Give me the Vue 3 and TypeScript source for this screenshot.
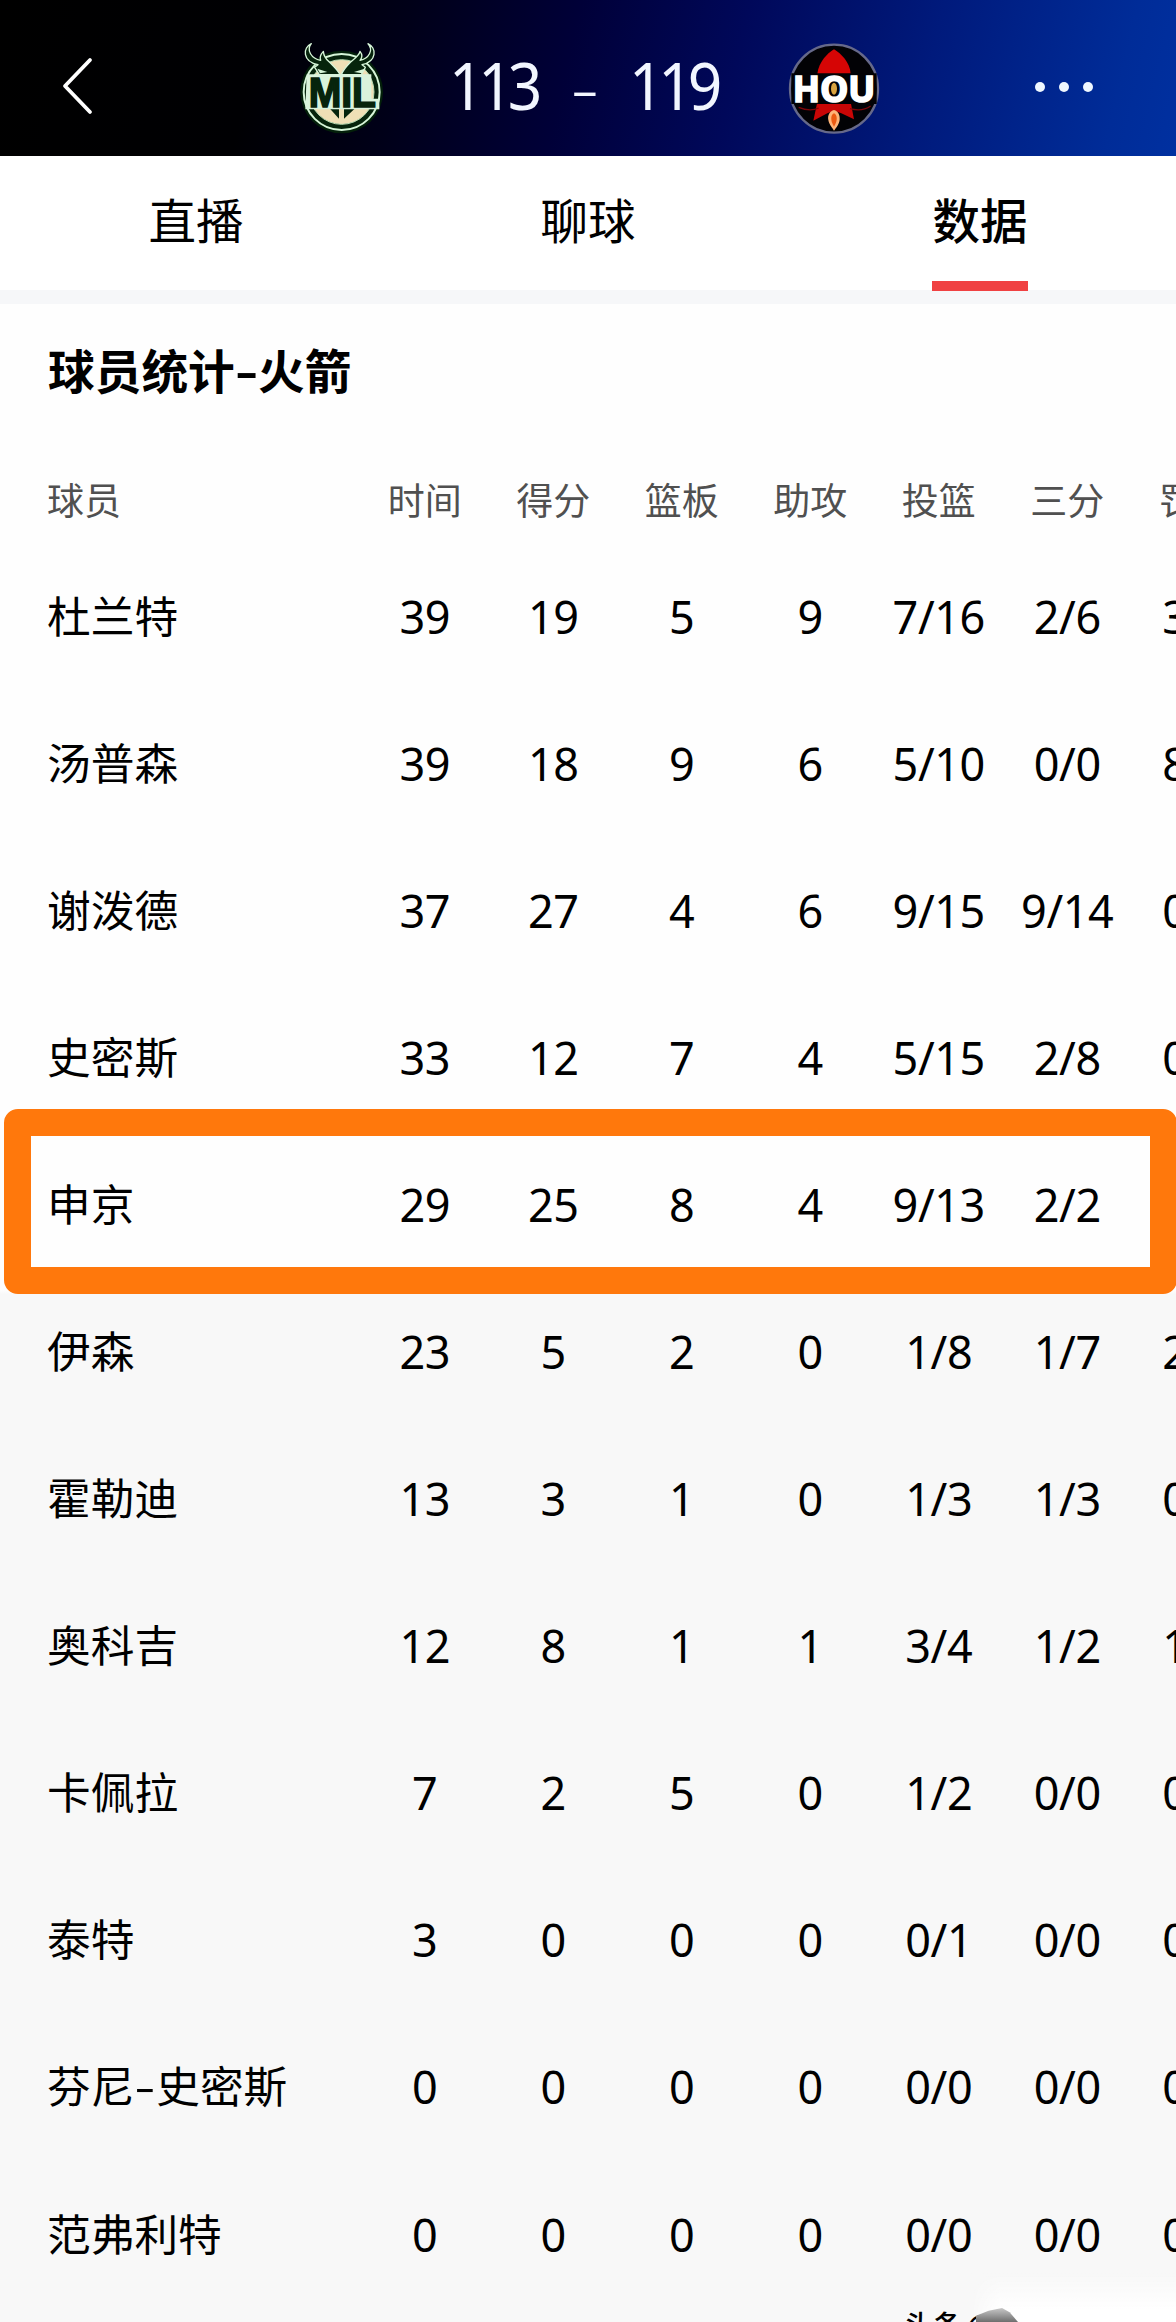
<script setup lang="ts">
import { ref } from 'vue';

interface Player {
  name: string;
  stats: string[];
  marked?: boolean;
}

const tabs = ['直播', '聊球', '数据'];
const activeTab = ref('数据');

const columns = ['时间', '得分', '篮板', '助攻', '投篮', '三分', '罚球'];

const players: Player[] = [
  { name: '杜兰特', stats: ['39', '19', '5', '9', '7/16', '2/6', '3/4'] },
  { name: '汤普森', stats: ['39', '18', '9', '6', '5/10', '0/0', '8/8'] },
  { name: '谢泼德', stats: ['37', '27', '4', '6', '9/15', '9/14', '0/0'] },
  { name: '史密斯', stats: ['33', '12', '7', '4', '5/15', '2/8', '0/0'] },
  { name: '申京', stats: ['29', '25', '8', '4', '9/13', '2/2', ''], marked: true },
  { name: '伊森', stats: ['23', '5', '2', '0', '1/8', '1/7', '2/2'] },
  { name: '霍勒迪', stats: ['13', '3', '1', '0', '1/3', '1/3', '0/0'] },
  { name: '奥科吉', stats: ['12', '8', '1', '1', '3/4', '1/2', '1/2'] },
  { name: '卡佩拉', stats: ['7', '2', '5', '0', '1/2', '0/0', '0/0'] },
  { name: '泰特', stats: ['3', '0', '0', '0', '0/1', '0/0', '0/0'] },
  { name: '芬尼-史密斯', stats: ['0', '0', '0', '0', '0/0', '0/0', '0/0'] },
  { name: '范弗利特', stats: ['0', '0', '0', '0', '0/0', '0/0', '0/0'] },
];
</script>

<template>
  <div class="page">
    <header class="header">
      <svg class="back" viewBox="0 0 48 70">
        <path d="M38 9 L13 35 L38 61" fill="none" stroke="#fff" stroke-width="3.8" stroke-linecap="round" stroke-linejoin="round" />
      </svg>
      <svg class="logo logo-mil" viewBox="0 0 360 330">
        <circle cx="185" cy="186" r="124" fill="#03200a" />
        <circle cx="185" cy="186" r="114" fill="#06240c" stroke="#d6f5d8" stroke-width="6" />
        <circle cx="185" cy="186" r="97" fill="#efdfb6" stroke="#b9dcb4" stroke-width="3" />
        <g fill="#06240c" stroke="#d6f5d8" stroke-width="4" stroke-linejoin="round">
          <path d="M94 41 C68 52 66 94 114 104 L104 112 L118 134 L180 134 C172 118 160 108 148 96 C136 86 131 76 130 64 C121 74 119 84 122 91 C94 86 78 60 94 41 Z" />
          <path d="M264 41 C290 52 292 94 246 104 L256 112 L244 134 L184 134 C190 118 200 108 212 96 C224 86 238 76 240 64 C248 74 246 84 240 91 C266 86 282 60 264 41 Z" />
        </g>
        <path d="M112 116 L142 126 L120 130 Z M254 116 L222 126 L246 130 Z" fill="#d6f5d8" />
        <path d="M150 236 L177 266 L177 236 Z M192 236 L192 266 L224 236 Z" fill="#06240c" />
        <path d="M80 133 H274 V206 H298 V238 H76 Z" fill="#d9f3dc" />
        <text x="187" y="230" text-anchor="middle" textLength="202" lengthAdjust="spacingAndGlyphs" class="mil-text">MIL</text>
      </svg>
      <div class="score">
        <span class="points">113</span>
        <span class="dash">-</span>
        <span class="points">119</span>
      </div>
      <svg class="logo logo-hou" viewBox="0 0 360 330">
        <circle cx="192" cy="176" r="132" fill="#020205" stroke="#66698a" stroke-width="7" />
        <path d="M192 58 C172 70 146 96 142 132 L242 132 C240 96 212 70 192 58 Z" fill="#d60505" />
        <path d="M142 216 L130 272 L172 250 L192 242 L214 250 L252 268 L242 216 Z" fill="#c90606" />
        <path d="M86 232 Q120 246 146 234 M240 236 Q276 246 302 228" fill="none" stroke="#7d0508" stroke-width="4" />
        <path d="M192 240 C180 242 172 256 175 270 C178 286 188 294 192 302 C198 294 206 286 209 270 C211 256 204 242 192 240 Z" fill="#ffb478" />
        <path d="M192 250 C182 254 180 272 192 290 C204 272 202 254 192 250 Z" fill="#ec5a12" />
        <path d="M64 130 H320 V222 H64 Z" fill="#020205" />
        <text x="192" y="215" text-anchor="middle" textLength="248" lengthAdjust="spacingAndGlyphs" class="hou-text">HOU</text>
        <ellipse cx="192" cy="176" rx="9" ry="18" fill="#d9a441" />
      </svg>
      <svg class="more" viewBox="0 0 60 12">
        <circle cx="6" cy="6" r="5" />
        <circle cx="30" cy="6" r="5" />
        <circle cx="54" cy="6" r="5" />
      </svg>
    </header>

    <nav class="tabs">
      <div
        v-for="tab in tabs"
        :key="tab"
        class="tab"
        :class="{ active: tab === activeTab }"
        @click="activeTab = tab"
      >
        <span class="tab-label">{{ tab }}</span>
      </div>
    </nav>

    <section class="panel">
      <h2 class="title">球员统计<span class="hyphen">-</span>火箭</h2>

      <div class="row head">
        <span class="name">球员</span>
        <span v-for="column in columns" :key="column" class="cell">{{ column }}</span>
      </div>

      <div v-for="player in players" :key="player.name" class="row" :class="{ marked: player.marked }">
        <span class="name">
          <template v-for="(part, i) in player.name.split('-')" :key="part">
            <span v-if="i > 0" class="hyphen">-</span>{{ part }}
          </template>
        </span>
        <span v-for="(stat, i) in player.stats" :key="i" class="cell">{{ stat }}</span>
      </div>
    </section>

    <div class="glow"></div>
    <div class="watermark">头条 <span class="at">@</span></div>
    <div class="smudge"></div>
  </div>
</template>

<style>
body {
  margin: 0;
}
</style>

<style scoped>
.page {
  position: relative;
  width: 1176px;
  height: 2322px;
  overflow: hidden;
  background: linear-gradient(#fefefe 0 1290px, #f8f8f8 1294px);
  color: #000;
  font-family: 'Noto Sans CJK SC', sans-serif;
}

.header {
  display: flex;
  align-items: center;
  box-sizing: border-box;
  height: 156px;
  padding: 14px 82px 0 52px;
  background: linear-gradient(103deg, #000 0%, #000003 22%, #000018 34%, #000038 48%, #00085a 62%, #001a7c 78%, #002c98 94%, #0030a0 100%);
}

.back {
  width: 48px;
  height: 70px;
  margin-top: 2px;
}

.logo {
  width: 120px;
  height: 110px;
}

.logo-mil {
  margin-left: 180px;
}

.logo-hou {
  margin-left: auto;
}

.mil-text {
  font: 700 127px 'Liberation Sans', sans-serif;
  fill: #06240c;
  stroke: #06240c;
  stroke-width: 5px;
}

.hou-text {
  font: 700 108px 'Open Sans', sans-serif;
  fill: #fff;
  stroke: #fff;
  stroke-width: 5px;
}

.score {
  display: flex;
  align-items: center;
  margin-left: 49px;
  color: #f2f6ff;
  font: 400 65px/90px 'Noto Sans', sans-serif;
}

.points {
  width: 84px;
  letter-spacing: -5.6px;
  white-space: nowrap;
  transform: scaleX(0.93);
  transform-origin: left;
}

.dash {
  width: 96px;
  padding-top: 3px;
  font-weight: 300;
  text-align: center;
  transform: translateX(4px) scaleX(1.35);
}

.more {
  width: 60px;
  height: 12px;
  margin: 4px 0 0 144px;
  fill: #f0f8ff;
}

.tabs {
  display: grid;
  grid-template-columns: repeat(3, 1fr);
  height: 134px;
  border-bottom: 14px solid #f6f7f9;
  background: #fff;
}

.tab {
  display: flex;
  justify-content: center;
}

.tab-label {
  box-sizing: border-box;
  width: 96px;
  height: 135px;
  font-size: 47.5px;
  line-height: 126px;
  text-align: center;
  white-space: nowrap;
}

.active .tab-label {
  border-bottom: 10px solid #f04142;
  font-weight: 500;
}

.panel {
  padding-left: 47px;
}

.title {
  margin: 0;
  height: 150px;
  padding-left: 1px;
  font-size: 46.7px;
  font-weight: 700;
  line-height: 130px;
}

.hyphen {
  display: inline-block;
  width: 0.5em;
  text-align: center;
  transform: scaleX(1.4);
}

.row {
  display: flex;
  align-items: center;
  width: 1220px;
  height: 147.06px;
  font-size: 43.7px;
}

.head {
  height: 89px;
  color: #505050;
  font-size: 37px;
}

.name {
  flex: none;
  width: 313.5px;
  padding-bottom: 5px;
}

.head .name {
  padding-bottom: 0;
}

.cell {
  flex: none;
  width: 128.5px;
  font-family: 'Noto Sans', 'Noto Sans CJK SC', sans-serif;
  font-size: 45px;
  letter-spacing: -0.4px;
  text-align: center;
  white-space: nowrap;
}

.head .cell {
  font-size: 37px;
  letter-spacing: 0;
}

.marked {
  position: relative;
}

.marked::before {
  content: '';
  position: absolute;
  top: -22px;
  left: -43px;
  box-sizing: border-box;
  width: 1173px;
  height: 185px;
  border: 27px solid #ff780c;
  border-radius: 14px;
}

/* share mark peeking in over the bottom edge */
.glow {
  position: absolute;
  left: 970px;
  top: 2272px;
  width: 206px;
  height: 50px;
  background: linear-gradient(rgba(255, 255, 255, 0), #fff 80%);
  mask-image: linear-gradient(90deg, transparent, #000 30px);
}

.watermark {
  position: absolute;
  left: 904px;
  top: 2307px;
  font-size: 29px;
  font-weight: 500;
  line-height: 34px;
  white-space: nowrap;
}

.at {
  margin-left: -2px;
}

.smudge {
  position: absolute;
  left: 976px;
  top: 2308px;
  width: 42px;
  height: 14px;
  background: linear-gradient(#c8c8c8, #6e6e6e);
  clip-path: polygon(0 55%, 30% 20%, 62% 0, 80% 30%, 100% 100%, 0 100%);
}
</style>
